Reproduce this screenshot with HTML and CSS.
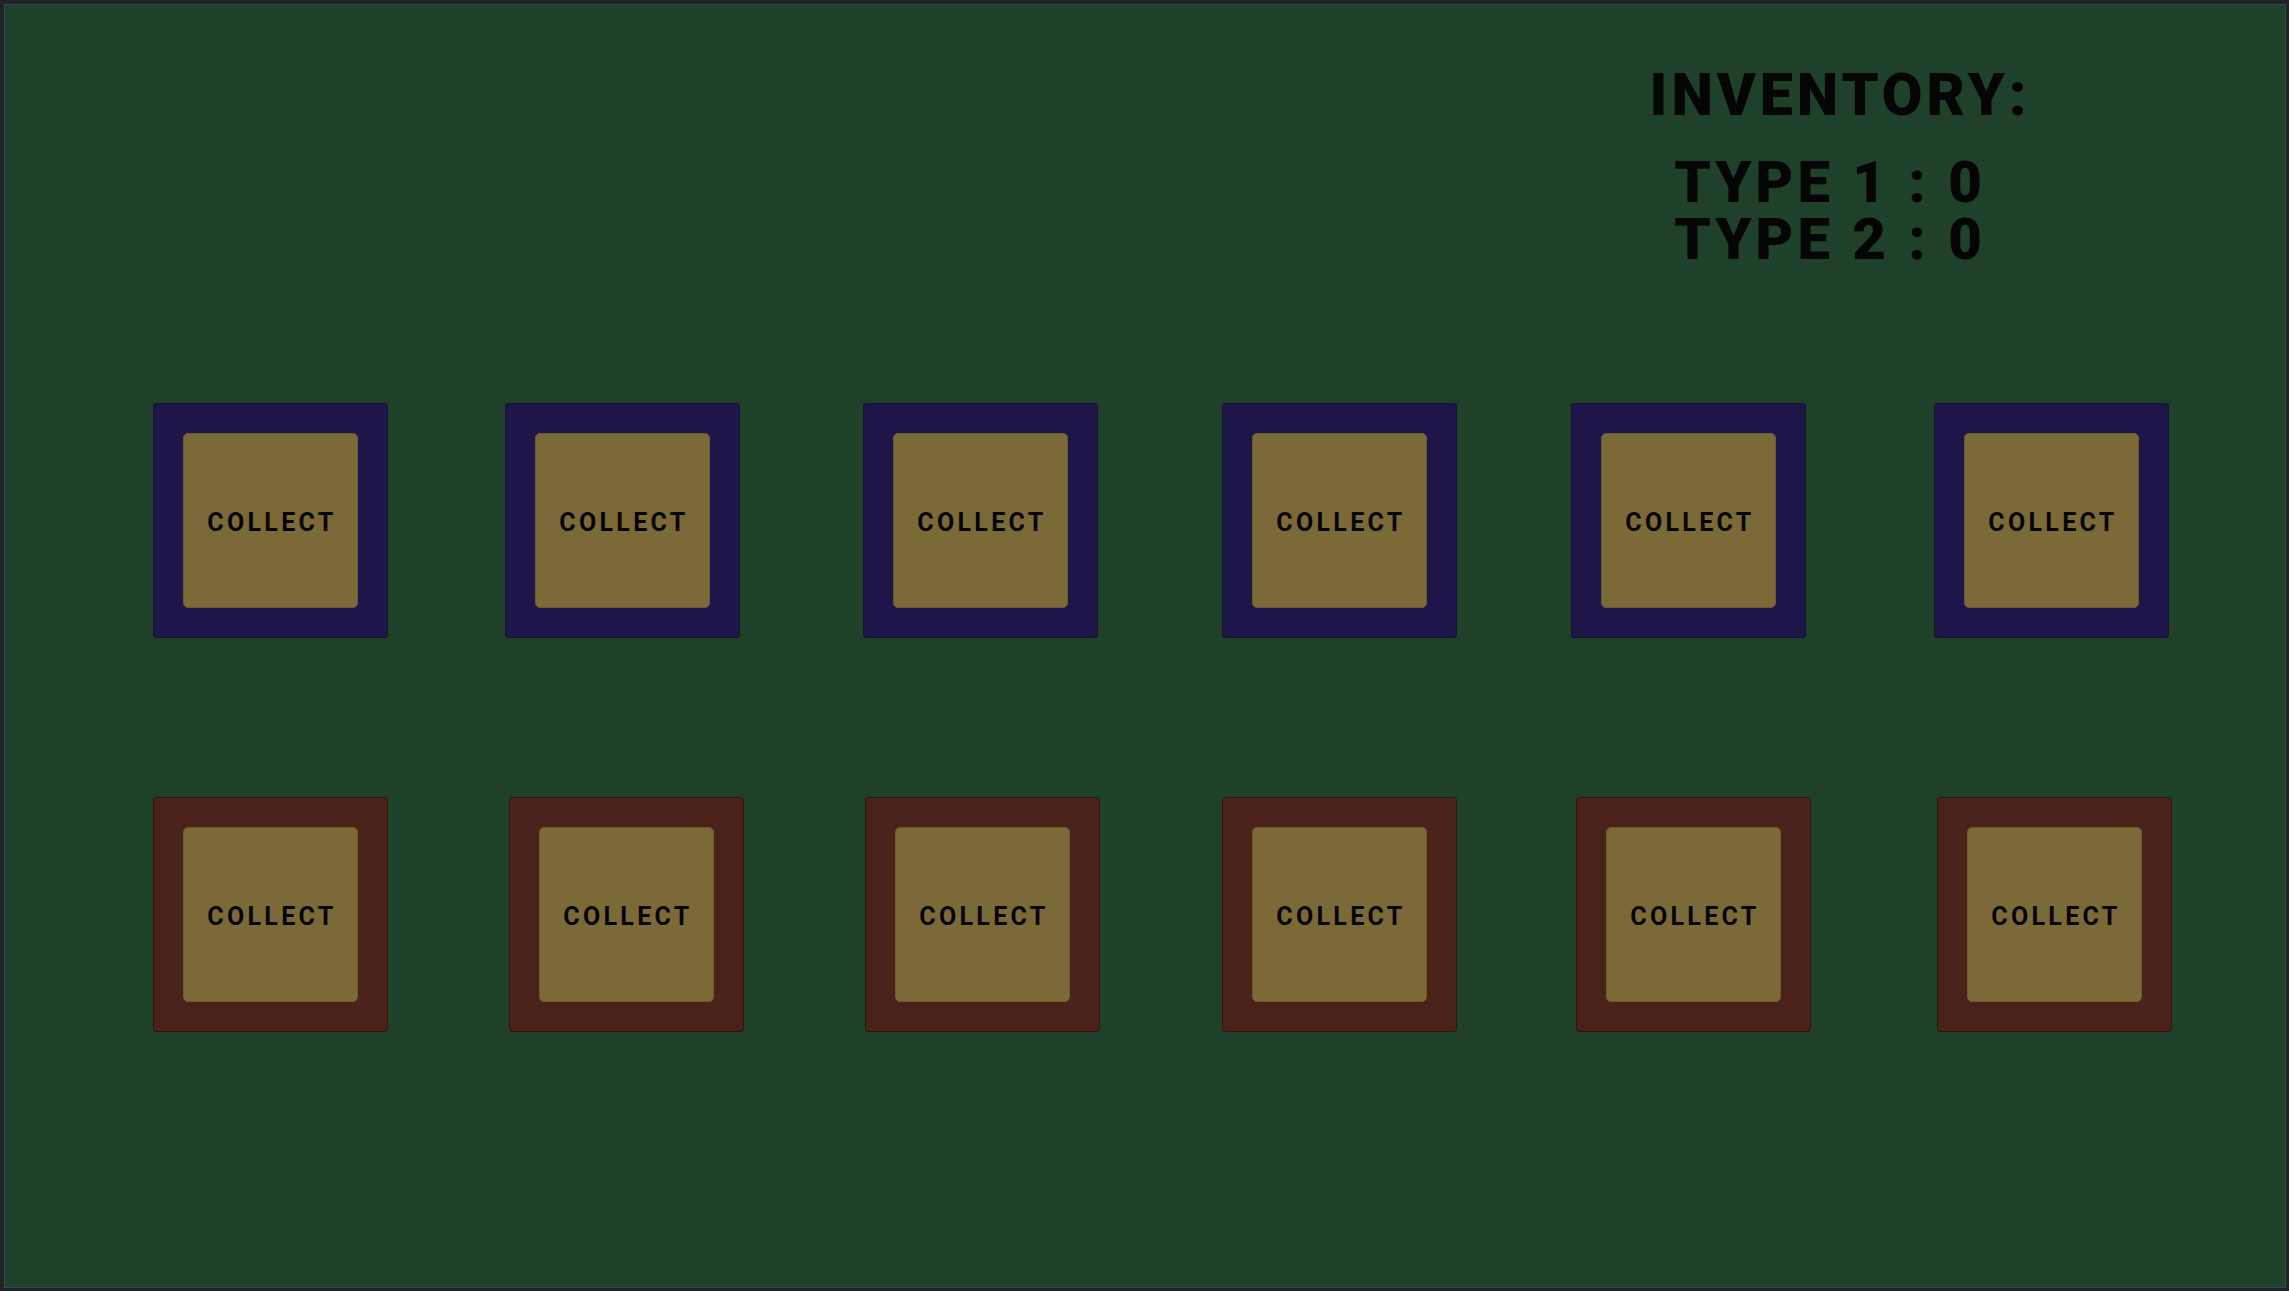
FILE: index.html
```html
<!doctype html>
<html>
<head>
  <link rel="stylesheet" href="styles.css">
</head>
<body>
  <main class="stage">
    <header class="inventory">
      <div class="inventory-box">
        <div class="inventory-title">INVENTORY:</div>
        <div class="inventory-count">TYPE 1 : 0<br>TYPE 2 : 0</div>
      </div>
    </header>

    <section class="slots slots-type1">
      <div class="slot"><button class="collect">COLLECT</button></div>
      <div class="slot"><button class="collect">COLLECT</button></div>
      <div class="slot"><button class="collect">COLLECT</button></div>
      <div class="slot"><button class="collect">COLLECT</button></div>
      <div class="slot"><button class="collect">COLLECT</button></div>
      <div class="slot"><button class="collect">COLLECT</button></div>
    </section>

    <section class="slots slots-type2">
      <div class="slot"><button class="collect">COLLECT</button></div>
      <div class="slot"><button class="collect">COLLECT</button></div>
      <div class="slot"><button class="collect">COLLECT</button></div>
      <div class="slot"><button class="collect">COLLECT</button></div>
      <div class="slot"><button class="collect">COLLECT</button></div>
      <div class="slot"><button class="collect">COLLECT</button></div>
    </section>
  </main>
</body>
</html>
```

FILE: styles.css
```css
html, body {
  height: 100%;
  margin: 0;
  overflow: hidden;
  background-color: #232323;
  font-family: Roboto, "Liberation Sans", sans-serif;
}
.stage {
  box-sizing: border-box;
  height: calc(100vh - 7px);
  margin: 4px 3px 3px 4px;
  border: 1px solid #2c4b6c;
  background-color: #1f4029;
  display: flex;
  flex-direction: column;
}
.inventory {
  display: flex;
  justify-content: flex-end;
  padding: 60px 210px 0 0;
}
.inventory-box {
  width: 470px;
  text-align: center;
  color: #050505;
  font-weight: 900;
}
.inventory-title {
  font-size: 59px;
  line-height: 59px;
  letter-spacing: 4px;
  margin-bottom: 30px;
}
.inventory-count {
  font-size: 58px;
  line-height: 57px;
  letter-spacing: 4px;
  padding-right: 20px;
}

/* the slots are laid out by hand in the scene, so the gaps differ a little */
.slots {
  display: flex;
  padding-left: 148px;
}
.slots-type1 {
  margin-top: 135px;
}
.slots-type2 {
  margin-top: 159px;
}
.slots-type1 .slot:nth-child(2) { margin-left: 117px; }
.slots-type1 .slot:nth-child(3) { margin-left: 123px; }
.slots-type1 .slot:nth-child(4) { margin-left: 124px; }
.slots-type1 .slot:nth-child(5) { margin-left: 114px; }
.slots-type1 .slot:nth-child(6) { margin-left: 128px; }
.slots-type2 .slot:nth-child(2) { margin-left: 121px; }
.slots-type2 .slot:nth-child(3) { margin-left: 121px; }
.slots-type2 .slot:nth-child(4) { margin-left: 122px; }
.slots-type2 .slot:nth-child(5) { margin-left: 119px; }
.slots-type2 .slot:nth-child(6) { margin-left: 126px; }

.slot {
  box-sizing: border-box;
  width: 235px;
  height: 235px;
  padding: 29px;
  border-radius: 3px;
  border: 1px solid #17122f;
  background-color: #1e1549;
}
.slots-type2 .slot {
  border-color: #2e1510;
  background-color: #4a2219;
}
.collect {
  width: 100%;
  height: 100%;
  margin: 0;
  padding: 4px 0 0 3px;
  border: 1px solid #6c5d31;
  border-radius: 5px;
  background-color: #7b6a38;
  color: #050505;
  font-family: inherit;
  font-size: 25px;
  font-weight: 700;
  letter-spacing: 3.3px;
}
```
